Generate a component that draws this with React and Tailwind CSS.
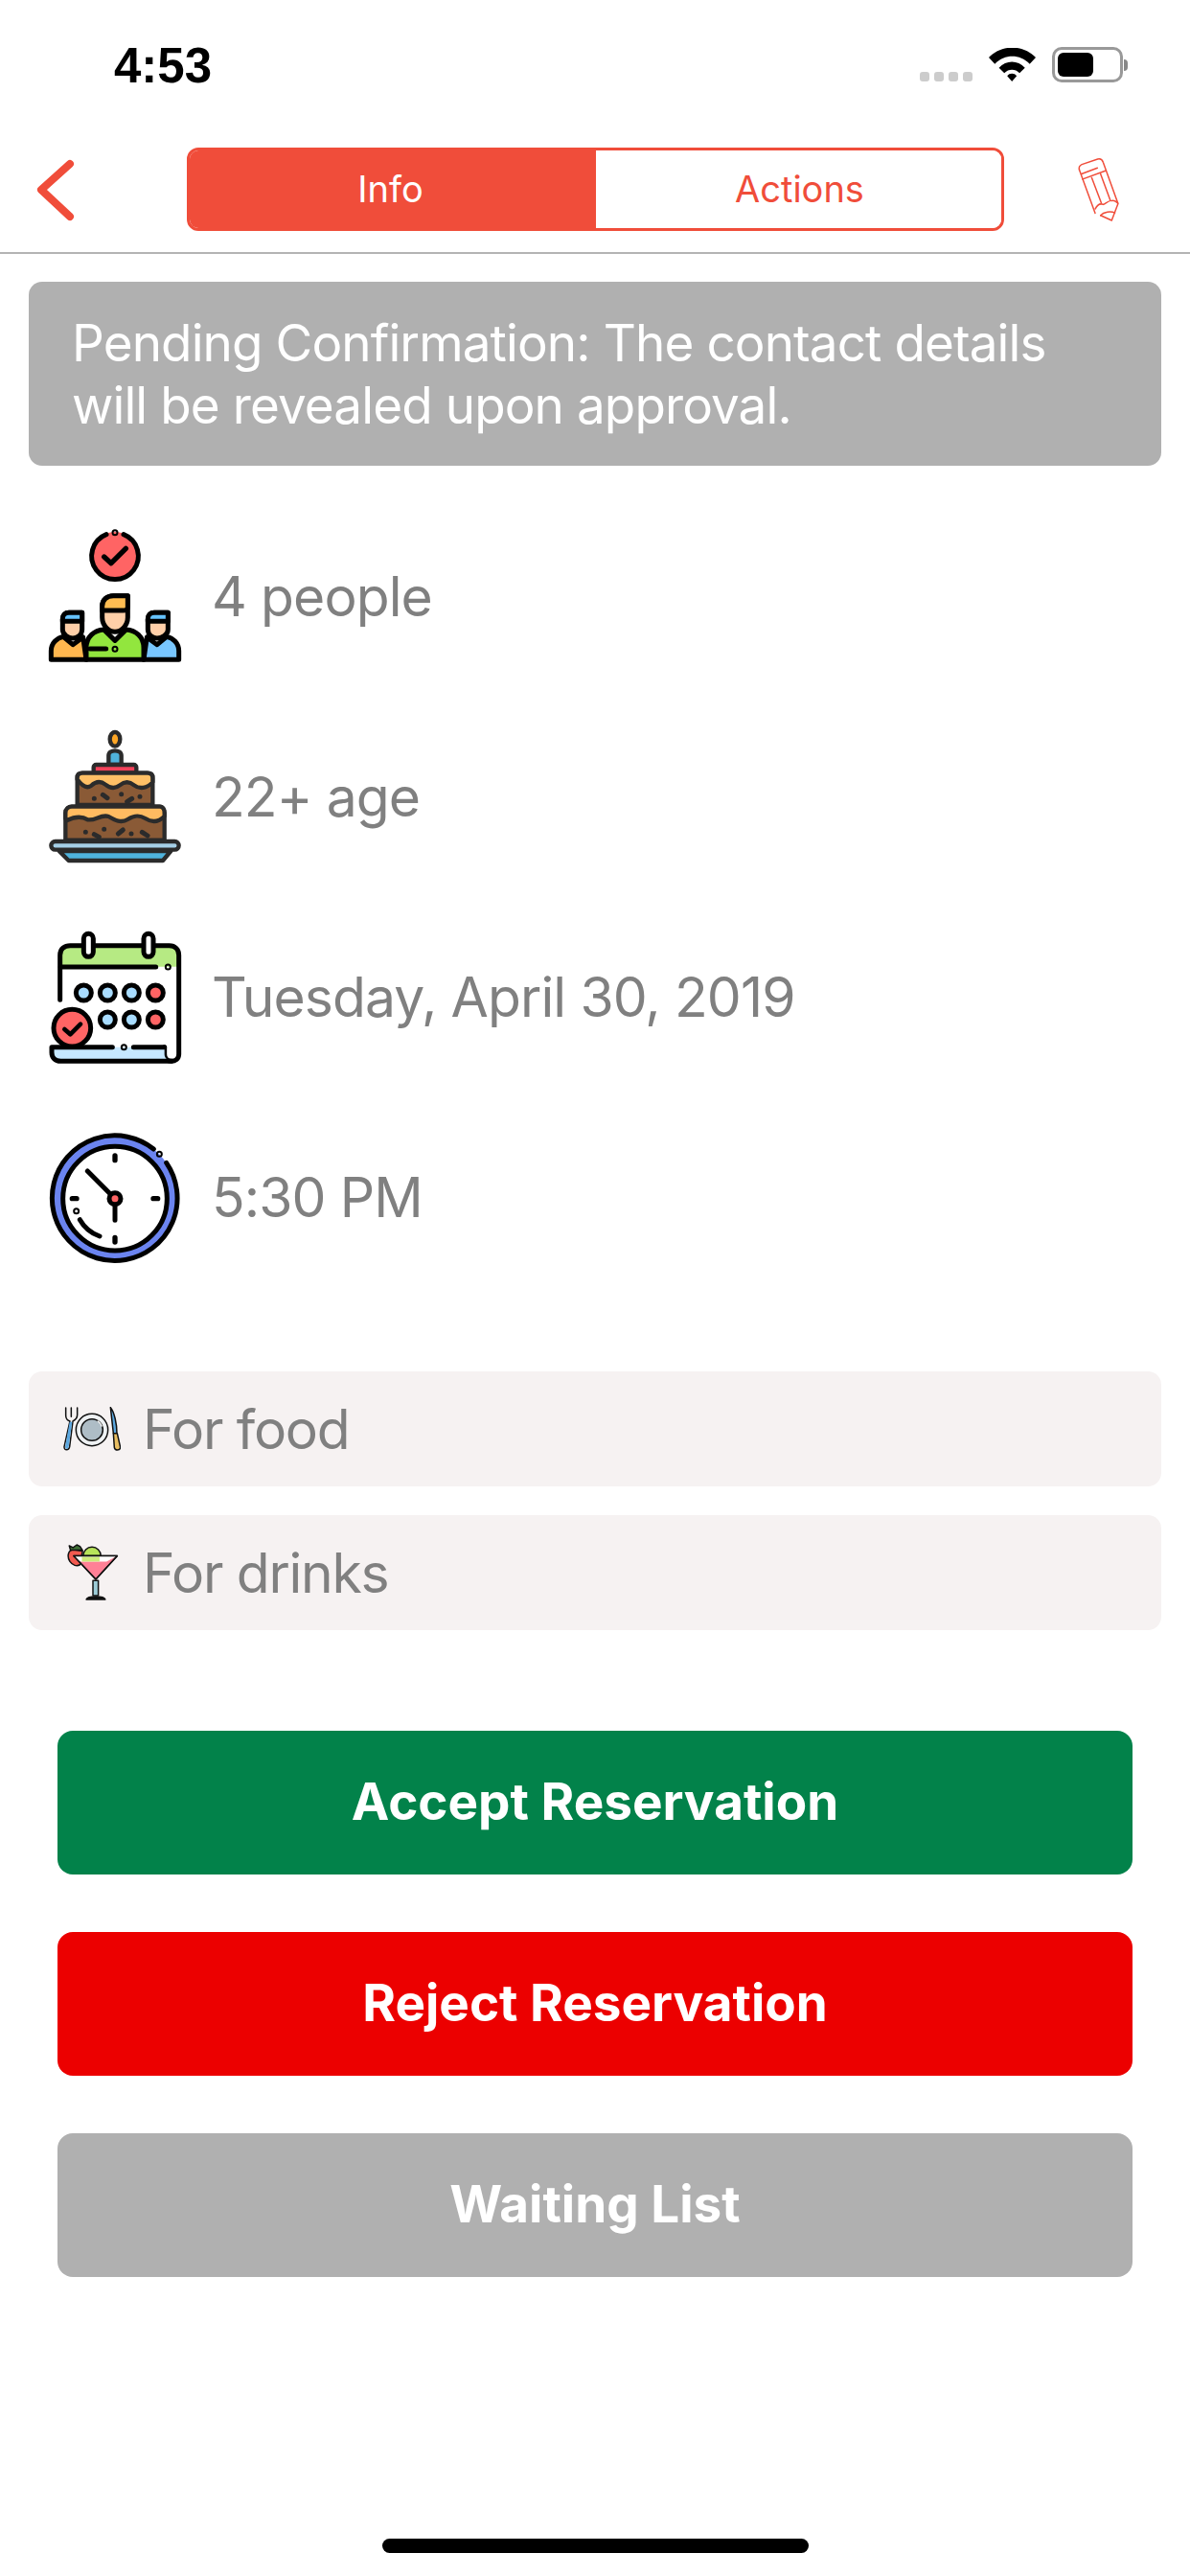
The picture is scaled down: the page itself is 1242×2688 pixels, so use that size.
function PeopleIcon() {
  return (
    <svg viewBox="0 36 510 480" className="w-[170px] h-[160px]" fill="none" stroke="#000" strokeWidth="15" strokeLinecap="round" strokeLinejoin="round">
      <circle cx="270" cy="145" r="73" fill="#ff6464" stroke="none" />
      <path d="M243 80A73 73 0 1 0 297 80" />
      <circle cx="270" cy="74" r="3" />
      <path d="M236 150L258 170L304 124" strokeWidth="16" />
      {/* left man */}
      <path d="M70 472V445C70 420 88 404 108 400L138 425L170 402L180 472Z" fill="#ffb74f" />
      <path d="M106 378V345C106 332 114 325 126 325H167V378C167 395 150 405 138 405C125 405 106 395 106 378Z" fill="#ffcfa8" />
      <path d="M106 352V345C106 332 114 325 126 325H167V352Z" fill="#66c3ff" />
      {/* right man */}
      <path d="M470 472V445C470 420 452 404 432 400L402 425L370 402L360 472Z" fill="#78c6ff" />
      <path d="M373 378V345C373 332 381 325 393 325H436V378C436 395 415 405 402 405C390 405 373 395 373 378Z" fill="#ffcfa8" />
      <path d="M373 352V345C373 332 381 325 393 325H436V352Z" fill="#66c3ff" />
      {/* middle man */}
      <path d="M180 472V435C180 400 205 380 235 378L270 412L305 378C335 380 360 400 360 435V472Z" fill="#92e63e" />
      <path d="M230 340V305C230 285 245 272 265 272H310V340C310 365 290 385 270 385C250 385 230 365 230 340Z" fill="#ffcfa8" />
      <path d="M230 318V305C230 285 245 272 265 272H310V305C310 315 305 318 295 318Z" fill="#ffbd52" />
      <path d="M192 438H242" />
      <circle cx="270" cy="439" r="3" />
    </svg>
  );
}

function CakeIcon() {
  return (
    <svg viewBox="0 6 510 480" className="w-[170px] h-[160px]" fill="none" stroke="#2b2b2b" strokeWidth="13" strokeLinecap="round" strokeLinejoin="round">
      <ellipse cx="270" cy="64" rx="16" ry="22" fill="#ffa726" />
      <path d="M250 144V115C250 95 290 95 290 115V144Z" fill="#4fb3dc" />
      <rect x="203" y="144" width="134" height="26" rx="8" fill="#f2425a" />
      <path d="M152 270V185C152 175 158 170 168 170H372C382 170 388 175 388 185V270Z" fill="#8a5a36" />
      <path d="M152 190V185C152 175 158 170 168 170H372C382 170 388 175 388 185V198C370 220 345 220 330 208C315 196 300 196 285 208C270 220 255 218 240 206C225 194 210 196 195 210C180 220 165 208 152 190Z" fill="#ffc066" />
      <path d="M115 380V295C115 282 125 275 135 275H410C420 275 425 285 425 295V380Z" fill="#8a5a36" />
      <path d="M115 295C115 282 125 275 135 275H410C420 275 425 285 425 295V305C405 325 385 325 365 312C345 300 330 302 310 315C290 328 270 318 250 306C225 298 210 320 185 316C165 304 145 306 120 318L115 312Z" fill="#ffbb61" />
      <g strokeWidth="15">
        <path d="M205 250V250M232 238L246 248M290 236V236M308 260L323 250M348 244V244" />
        <path d="M178 355V355M205 362L220 370M236 346V346M280 360L295 348M321 360V360M355 355L372 366" />
      </g>
      <path d="M95 414H445L420 444H125Z" fill="#4fb3dc" />
      <rect x="70" y="384" width="400" height="26" rx="13" fill="#a5cfe6" />
    </svg>
  );
}

function CalendarIcon() {
  return (
    <svg viewBox="0 3 510 480" className="w-[170px] h-[160px]" fill="none" stroke="#000" strokeWidth="15" strokeLinecap="round" strokeLinejoin="round">
      <path d="M100 146V110C100 90 112 80 130 80H440C458 80 470 92 470 110V146Z" fill="#b6ea83" stroke="none" />
      <path d="M98 250V110C98 90 112 80 130 80H440C458 80 470 92 470 110V420C470 435 458 442 447 442C435 442 425 435 425 420V398" />
      <path d="M100 147H398" />
      <circle cx="436" cy="147" r="3" />
      <rect x="172" y="43" width="30" height="72" rx="15" fill="#fff" />
      <rect x="360" y="43" width="30" height="72" rx="15" fill="#fff" />
      {[[172, 228, "#a8dcff"], [247, 228, "#a8dcff"], [322, 228, "#a8dcff"], [397, 228, "#ff6464"], [247, 312, "#a8dcff"], [322, 312, "#a8dcff"], [397, 312, "#ff6464"]].map(([cx, cy, c]) => (
        <circle key={`${cx}-${cy}`} cx={cx} cy={cy} r="24" fill={c} />
      ))}
      <path d="M72 398H425V420C425 430 432 438 445 442H100C82 442 72 430 72 415Z" fill="#c6e8ff" stroke="none" />
      <path d="M262 398H72V415C72 430 82 442 100 442H447M328 398H425" />
      <circle cx="298" cy="398" r="3" />
      <circle cx="136" cy="338" r="58" fill="#ff6464" />
      <path d="M112 342L130 358L162 326" strokeWidth="14" />
    </svg>
  );
}

function ClockIcon() {
  return (
    <svg viewBox="0 0 510 480" className="w-[170px] h-[160px]" fill="none" stroke="#000" strokeWidth="15" strokeLinecap="round" strokeLinejoin="round">
      <circle cx="270" cy="242" r="180" stroke="#6b84f0" strokeWidth="32" />
      <path d="M391 87A196 196 0 1 0 431 130" />
      <circle cx="409" cy="103" r="3" />
      <circle cx="270" cy="242" r="163" fill="#fff" />
      <path d="M270 108V122M270 364V378M136 242H150M390 242H404" strokeWidth="16" />
      <path d="M184 156L270 242V310" />
      <circle cx="149" cy="281" r="3" />
      <path d="M160 308C175 335 195 350 222 360" />
      <circle cx="270" cy="242" r="18" fill="#ff6464" />
    </svg>
  );
}

function CutleryIcon() {
  return (
    <svg viewBox="138 145 180 138" className="w-[60px] h-[46px] ml-[36px]" fill="none" stroke="#111" strokeWidth="4.5" strokeLinecap="round" strokeLinejoin="round">
      <path d="M146 148V172C146 182 152 188 159 190L141 270C140 282 156 282 158 270L168 190C176 186 182 180 182 170V148M163 148V176" />
      <path d="M158 192L144 270C144 278 154 278 155 270L166 192Z" fill="#5ca8e0" stroke="none" />
      <circle cx="228" cy="217" r="50" fill="#eef1f3" />
      <circle cx="228" cy="217" r="34" fill="#aebdc6" />
      <path d="M247 190A34 34 0 0 1 258 205" stroke="#fff" />
      <path d="M286 147C298 160 306 200 306 228H295Z" fill="#5ca8e0" />
      <path d="M295 228H307L317 272C316 283 300 283 298 272Z" fill="#e8be62" />
    </svg>
  );
}

function CocktailIcon() {
  return (
    <svg viewBox="148 572 162 182" className="w-[54px] h-[60px] ml-[40px]" fill="none" stroke="#111" strokeWidth="4.5" strokeLinecap="round" strokeLinejoin="round">
      <path d="M168 590C150 590 146 612 156 628C164 640 178 644 188 638L196 595Z" fill="#f25a50" />
      <path d="M154 578L166 584L178 575L188 580L196 592H158Z" fill="#3f6f35" />
      <path d="M198 610A28 28 0 0 1 254 610Z" fill="#b7e35a" />
      <path d="M168 610H306L238 684Z" fill="#ff8096" />
      <path d="M184 628L168 610H306L272 628H184Z" fill="#fff" stroke="none" />
      <path d="M194 613H250V628H194Z" fill="#cdea7c" stroke="none" />
      <path d="M168 610H306L238 684Z" />
      <path d="M229 688H246V736H229Z" fill="#9dcbd6" />
      <path d="M208 748C212 736 264 736 268 748Z" fill="#111" />
    </svg>
  );
}

function PencilIcon() {
  return (
    <svg viewBox="125 60 150 220" className="w-[50px] h-[73px]" fill="none" stroke="#f04d3a" strokeWidth="4.5" strokeLinecap="round" strokeLinejoin="round">
      <path d="M138 108C136 100 140 95 146 92L196 75C204 73 210 76 213 85L260 215L240 268L205 252" />
      <path d="M138 108L188 245" />
      <path d="M145 122L195 103M149 138L220 112" />
      <path d="M177 133L207 212M205 122L235 203" />
      <path d="M188 232C195 218 205 214 214 218C222 214 232 204 240 206C246 204 254 208 259 214" />
      <path d="M205 252C215 240 238 238 250 244" />
    </svg>
  );
}

function Row({ icon, text }) {
  return (
    <div className="h-[209px] flex items-center pl-[30px] gap-[21px]">
      {icon}
      <span className="text-[57px] tracking-[-0.9px] text-[#808080]">{text}</span>
    </div>
  );
}

function Pill({ icon, text }) {
  return (
    <div className="h-[120px] mx-[30px] rounded-[14px] bg-[#f6f2f2] flex items-center">
      <div className="w-[119px] shrink-0">{icon}</div>
      <span className="text-[57px] tracking-[-1.3px] leading-none text-[#808080]">{text}</span>
    </div>
  );
}

function ActionButton({ label, color }) {
  return (
    <button className={`h-[150px] mx-[60px] rounded-[16px] text-white font-bold text-[53px] flex items-center justify-center ${color}`}>
      {label}
    </button>
  );
}

export default function App() {
  return (
    <div className="w-[1242px] h-[2688px] bg-white flex flex-col font-['Inter','Liberation_Sans',sans-serif] overflow-hidden">
      {/* Status bar */}
      <div className="h-[132px] flex items-start justify-between pt-[42px] pl-[119px] pr-[65px] shrink-0">
        <span className="text-[51px] leading-[54px] font-bold text-black font-['Liberation_Sans',sans-serif]">4:53</span>
        <div className="flex items-center gap-[17px] mt-[7px]">
          <div className="flex gap-[5px] mt-[25px]">
            <span className="w-[10px] h-[10px] rounded-[3px] bg-[#ccc]" />
            <span className="w-[10px] h-[10px] rounded-[3px] bg-[#ccc]" />
            <span className="w-[10px] h-[10px] rounded-[3px] bg-[#ccc]" />
            <span className="w-[10px] h-[10px] rounded-[3px] bg-[#ccc]" />
          </div>
          <svg viewBox="275 60 148 105" className="w-[49px] h-[35px]" fill="#000">
            <path d="M275 90C315 48 383 48 423 90L404 110C372 78 326 78 294 110Z" />
            <path d="M307 122C330 97 366 97 389 122L372 139C358 125 338 125 324 139Z" />
            <path d="M333 148C340 138 356 138 363 148L348 165Z" />
          </svg>
          <div className="flex items-center">
            <div className="w-[74px] h-[37px] rounded-[10px] border-[3px] border-[#999] p-[3px]">
              <div className="w-[37px] h-full rounded-[6px] bg-black" />
            </div>
            <div className="w-[4px] h-[12px] rounded-r-[4px] bg-[#888] ml-[1px]" />
          </div>
        </div>
      </div>

      {/* Nav bar */}
      <div className="h-[133px] flex items-center border-b-2 border-[#b4b4b4] shrink-0">
        <div className="w-[195px] shrink-0 pl-[36px]">
          <svg viewBox="0 0 44 70" className="w-[44px] h-[70px]" fill="none" stroke="#f04d3a" strokeWidth="8" strokeLinecap="round" strokeLinejoin="round">
            <path d="M37 8L7 35L37 63" />
          </svg>
        </div>
        <div className="w-[853px] h-[87px] flex rounded-[12px] border-[3px] border-[#f04d3a] overflow-hidden text-[38px]">
          <div className="w-[424px] bg-[#f04d3a] text-white flex items-center justify-center pr-[5px]">Info</div>
          <div className="flex-1 bg-white text-[#f04d3a] flex items-center justify-center pl-[2px]">Actions</div>
        </div>
        <div className="flex-1 flex justify-center pl-[3px]">
          <PencilIcon />
        </div>
      </div>

      {/* Pending banner */}
      <div className="mt-[29px] mx-[30px] h-[192px] rounded-[14px] bg-[#b0b0b0] text-white text-[53px] tracking-[-0.9px] leading-[65px] pl-[45px] pr-[46px] flex items-center shrink-0">
        <p className="pt-[2px]">Pending Confirmation: The contact details will be revealed upon approval.</p>
      </div>

      {/* Details */}
      <div className="mt-[32px] flex flex-col">
        <Row icon={<PeopleIcon />} text="4 people" />
        <Row icon={<CakeIcon />} text="22+ age" />
        <Row icon={<CalendarIcon />} text="Tuesday, April 30, 2019" />
        <Row icon={<ClockIcon />} text="5:30 PM" />
      </div>

      <div className="mt-[77px] flex flex-col gap-[30px]">
        <Pill icon={<CutleryIcon />} text="For food" />
        <Pill icon={<CocktailIcon />} text="For drinks" />
      </div>

      <div className="mt-[105px] flex flex-col gap-[60px]">
        <ActionButton label="Accept Reservation" color="bg-[#02824a]" />
        <ActionButton label="Reject Reservation" color="bg-[#ec0000]" />
        <ActionButton label="Waiting List" color="bg-[#b0b0b0]" />
      </div>

      {/* Home indicator */}
      <div className="mt-auto mb-[24px] mx-auto w-[445px] h-[15px] rounded-full bg-black" />
    </div>
  );
}
